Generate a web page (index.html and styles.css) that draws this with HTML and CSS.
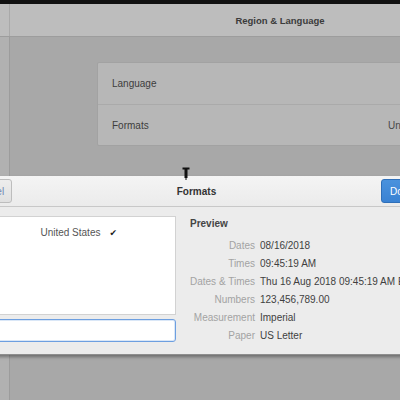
FILE: index.html
```html
<!DOCTYPE html>
<html>
<head>
<meta charset="utf-8">
<link rel="stylesheet" href="styles.css">
</head>
<body>
<div class="screen">
  <div class="topbar"></div>
  <div class="window">
    <div class="headerbar">
      <div class="side-head"></div>
      <div class="main-head"><span class="win-title">Region &amp; Language</span></div>
    </div>
    <div class="content">
      <div class="sidebar"></div>
      <div class="main">
        <div class="card">
          <div class="row"><span>Language</span></div>
          <div class="row"><span>Formats</span><span class="row-value">United States</span></div>
        </div>
      </div>
    </div>
  </div>

  <div class="dialog">
    <div class="dlg-head">
      <button class="btn cancel">Cancel</button>
      <span class="dlg-title">Formats</span>
      <button class="btn done">Done</button>
    </div>
    <div class="dlg-body">
      <div class="picker">
        <div class="list">
          <div class="list-row"><span>United States</span><span class="check">&#10004;</span></div>
        </div>
        <div class="entry"></div>
      </div>
      <div class="preview">
        <div class="preview-title">Preview</div>
        <div class="grid">
          <span class="lbl">Dates</span><span class="val">08/16/2018</span>
          <span class="lbl">Times</span><span class="val">09:45:19 AM</span>
          <span class="lbl">Dates &amp; Times</span><span class="val">Thu 16 Aug 2018 09:45:19 AM EDT</span>
          <span class="lbl">Numbers</span><span class="val">123,456,789.00</span>
          <span class="lbl">Measurement</span><span class="val">Imperial</span>
          <span class="lbl">Paper</span><span class="val">US Letter</span>
        </div>
      </div>
    </div>
  </div>

  <svg class="cursor" width="8" height="13" viewBox="0 0 8 13">
    <rect x="0.5" y="0.5" width="7" height="2" fill="#111"/>
    <rect x="2.5" y="2" width="3" height="9" fill="#111"/>
    <rect x="3.5" y="11" width="1" height="2" fill="#111"/>
  </svg>
</div>
</body>
</html>
```

FILE: styles.css
```css
* { box-sizing: border-box; }
html, body { margin: 0; padding: 0; }
body {
  width: 400px;
  height: 400px;
  overflow: hidden;
  font-family: "Liberation Sans", "DejaVu Sans", sans-serif;
  font-size: 10px;
  background: #a6a6a6;
}
.screen {
  position: relative;
  width: 400px;
  height: 400px;
  overflow: hidden;
}
.topbar {
  height: 4px;
  background: #111;
}
.window {
  width: 550px;
  height: 396px;
  display: flex;
  flex-direction: column;
}
.headerbar {
  height: 33px;
  display: flex;
  background: #bdbdbd;
  border-bottom: 1px solid #9d9d9d;
}
.side-head {
  width: 10px;
  border-right: 1px solid #a9a9a9;
}
.main-head {
  flex: 1;
  display: flex;
  align-items: center;
  justify-content: center;
}
.win-title {
  font-weight: bold;
  color: #3b3b3b;
  font-size: 9.5px;
}
.content {
  flex: 1;
  display: flex;
}
.sidebar {
  width: 10px;
  background: #b1b1b1;
  border-right: 1px solid #9c9c9c;
}
.main {
  flex: 1;
  background: #a8a8a8;
  padding-top: 25px;
  display: flex;
  justify-content: center;
  align-items: flex-start;
}
.card {
  width: 366px;
  background: #b7b7b7;
  border: 1px solid #a2a2a2;
  border-radius: 2px;
}
.row {
  height: 41px;
  display: flex;
  align-items: center;
  padding: 0 14px;
  color: #3d3d3d;
}
.row + .row { border-top: 1px solid #aaaaaa; }
.row-value { margin-left: auto; color: #4a4a4a; padding-right: 0; }

.dialog {
  position: absolute;
  left: -20px;
  top: 176px;
  width: 434px;
  background: #ececec;
  border-bottom: 1px solid #8e8e8e;
  box-shadow: 0 2px 3px rgba(0,0,0,0.35);
}
.dlg-head {
  height: 31px;
  display: flex;
  align-items: center;
  justify-content: space-between;
  padding: 0 6px;
  background: linear-gradient(#f4f4f4, #ebebeb);
  border-bottom: 1px solid #c8c8c8;
}
.btn {
  font-family: inherit;
  font-size: 10px;
  height: 24px;
  border-radius: 3px;
  padding: 0 8px;
}
.cancel {
  width: 26px;
  overflow: hidden;
  text-indent: -22px;
  color: #6d8ab5;
  background: linear-gradient(#ededed, #e0e0e0);
  border: 1px solid #bdbdbd;
}
.done {
  width: 28px;
  margin-right: -1px;
  color: #fff;
  background: linear-gradient(#4a92dd, #3a82d3);
  border: 1px solid #2f6fb8;
  text-align: left;
}
.dlg-title {
  font-weight: bold;
  color: #333;
}
.dlg-body {
  display: flex;
  padding: 9px 12px 10px;
  gap: 14px;
}
.picker {
  flex: 0 0 184px;
  display: flex;
  flex-direction: column;
  gap: 4px;
}
.list {
  height: 99px;
  background: #fff;
  border: 1px solid #d2d2d2;
}
.list-row {
  display: flex;
  align-items: center;
  justify-content: flex-end;
  gap: 9px;
  padding: 10px 58px 0 0;
  color: #555;
}
.check { font-size: 9px; color: #222; }
.entry {
  height: 23px;
  background: #fff;
  border: 1px solid #6d9fe0;
  border-radius: 3px;
  box-shadow: inset 0 0 0 1px rgba(109,159,224,0.25);
}
.preview {
  flex: 1;
  min-width: 0;
  padding-top: 1px;
}
.preview-title {
  font-weight: bold;
  color: #444;
  height: 19px;
  line-height: 14px;
}
.grid {
  display: grid;
  grid-template-columns: 65px auto;
  column-gap: 5px;
  grid-auto-rows: 18px;
  align-items: center;
}
.lbl {
  text-align: right;
  color: #a3a3a3;
  white-space: nowrap;
}
.val {
  color: #3f3f3f;
  white-space: nowrap;
}
.cursor {
  position: absolute;
  left: 182px;
  top: 167px;
}
```
